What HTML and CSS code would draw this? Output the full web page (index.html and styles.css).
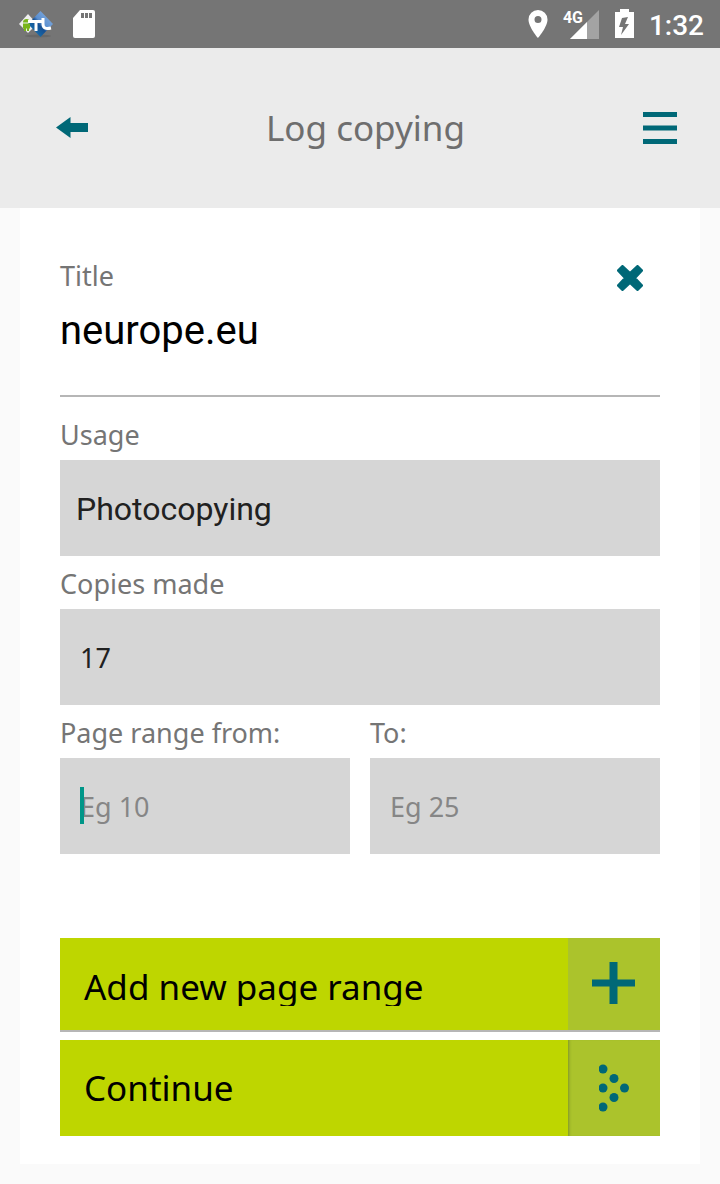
FILE: index.html
```html
<!DOCTYPE html>
<html lang="en">
<head>
<meta charset="utf-8">
<meta name="viewport" content="width=device-width, initial-scale=1">
<title>Log copying</title>
<link rel="stylesheet" href="styles.css">
</head>
<body>
<div class="status-bar">
  <div class="status-group">
    <svg class="app-logo" width="36" height="30" viewBox="0 0 36 30" aria-hidden="true">
      <defs><linearGradient id="blue" x1="1" y1="0" x2="0" y2="1"><stop offset="0" stop-color="#8db4e2"/><stop offset=".45" stop-color="#5b8fd0"/><stop offset=".55" stop-color="#164f92"/><stop offset="1" stop-color="#1685c0"/></linearGradient></defs>
      <ellipse cx="20" cy="27" rx="13" ry="1.500" fill="#686868"/>
      <path d="M1 15 10 5l9 10-9 9z" fill="#eee"/>
      <path d="M10 15 22.500 2 35 15 22.500 28z" fill="url(#blue)"/>
      <path d="M5 13.500a3.500 3.500 0 0 1 7 0zM5 14.500h7v5H5zM6 19h2v3H6zM9 19h2v3H9z" fill="#79b51c"/>
      <path d="M10 12.500h15M18 12.500V22M25 9v6q0 6 8 4" fill="none" stroke="#fff" stroke-width="3"/>
    </svg>
    <svg width="24" height="30" viewBox="0 0 24 30" aria-hidden="true">
      <path d="M8 1h13q2 0 2 2v24q0 2-2 2H3q-2 0-2-2V9z" fill="#fff"/>
      <path d="M9 4h3v5H9zM13 4h3v5h-3zM17 4h3v5h-3z" fill="#757575"/>
    </svg>
  </div>
  <div class="status-group status-right">
    <svg width="20" height="30" viewBox="0 0 20 30" aria-hidden="true">
      <path d="M10 1A9.500 9.500 0 0 0 .500 10.500C.500 18 10 29 10 29s9.500-11 9.500-18.500A9.500 9.500 0 0 0 10 1zm0 6a3.500 3.500 0 1 1 0 7 3.500 3.500 0 0 1 0-7z" fill="#fff"/>
    </svg>
    <div class="signal">
      <svg width="29" height="29" viewBox="0 0 29 29" aria-hidden="true">
        <path d="M29 0v29H0z" fill="#a3a3a3"/><path d="M17 12v17H0z" fill="#fff"/>
      </svg>
      <span class="network">4G</span>
    </div>
    <svg width="20" height="30" viewBox="0 0 20 30" aria-hidden="true">
      <path d="M6 0h9v3h5v26H1V3h5z" fill="#fff"/>
      <path d="M14 8 8 9 5 18h4l-2 8 8-11h-4z" fill="#757575"/>
    </svg>
    <span class="clock">1:32</span>
  </div>
</div>

<header class="header">
  <button class="icon-button" type="button" aria-label="Back">
    <svg width="32" height="22" viewBox="0 0 32 22"><path d="M0 10.500 14.500 0v6H32v9H14.500v6z" fill="#006877"/></svg>
  </button>
  <h1 class="heading">Log copying</h1>
  <button class="icon-button" type="button" aria-label="Menu">
    <svg width="34" height="32" viewBox="0 0 34 32"><path d="M0 0h34v5H0zM0 13.500h34v5H0zM0 27h34v5H0z" fill="#006877"/></svg>
  </button>
</header>

<main class="card">
  <section class="title-block">
    <div>
      <p class="label title-label">Title</p>
      <h2 class="title">neurope.eu</h2>
    </div>
    <button class="icon-button remove" type="button" aria-label="Remove title">
      <svg width="26" height="26" viewBox="0 0 26 26"><path d="M5.500 1.500 13 8.500 20.500 1.500 24.500 5.500 17.500 13 24.500 20.500 20.500 24.500 13 17.500 5.500 24.500 1.500 20.500 8.500 13 1.500 5.500z" fill="#006877" stroke="#006877" stroke-width="3" stroke-linejoin="round"/></svg>
    </button>
  </section>
  <form class="form">
    <label class="label" for="usage">Usage</label>
    <select class="field usage" id="usage"><option>Photocopying</option></select>
    <label class="label" for="copies">Copies made</label>
    <input class="field" id="copies" type="text" inputmode="numeric" value="17">
    <div class="range">
      <div class="range-part">
        <label class="label" for="from">Page range from:</label>
        <div class="active-field">
          <span class="caret"></span>
          <input class="field" id="from" type="text" inputmode="numeric" placeholder="Eg 10">
        </div>
      </div>
      <div class="range-part">
        <label class="label" for="to">To:</label>
        <input class="field" id="to" type="text" inputmode="numeric" placeholder="Eg 25">
      </div>
    </div>
    <div class="actions">
      <button class="action add" type="button">
        <span class="action-text">Add new page range</span>
        <span class="action-icon">
          <svg width="44" height="44" viewBox="0 0 44 44" aria-hidden="true"><path d="M17.500 0h8v17.500H43v7H25.500V42h-8V24.500H0v-7h17.500z" fill="#006877"/></svg>
        </span>
      </button>
      <button class="action continue" type="button">
        <span class="action-text">Continue</span>
        <span class="action-icon">
          <svg width="30" height="48" viewBox="0 0 30 48" aria-hidden="true" fill="#006877"><circle cx="4" cy="5" r="4.500"/><circle cx="15" cy="14.500" r="4.500"/><circle cx="4" cy="24" r="4.500"/><circle cx="25.500" cy="24" r="4.500"/><circle cx="15" cy="33.500" r="4.500"/><circle cx="4" cy="43" r="4.500"/></svg>
        </span>
      </button>
    </div>
  </form>
</main>
</body>
</html>
```
FILE: styles.css
```css
* {
  box-sizing: border-box;
}

body {
  margin: 0;
  background: #fafafa;
  color: #000;
  font-family: "Noto Sans", sans-serif;
}

h1, h2, p {
  margin: 0;
  font-weight: 400;
}

svg {
  display: block;
}

.status-bar {
  display: flex;
  justify-content: space-between;
  align-items: center;
  height: 48px;
  padding: 0 16px 0 18px;
  background: #757575;
  color: #fff;
  font-family: Roboto, sans-serif;
}

.status-group {
  display: flex;
  align-items: center;
  gap: 18px;
}

.status-right {
  gap: 15px;
}

.signal {
  position: relative;
  padding-left: 7px;
}

.network {
  position: absolute;
  top: 0;
  left: 0;
  font-size: 16px;
  font-weight: 700;
  line-height: 16px;
}

.clock {
  padding-top: 3px;
  font-size: 28px;
  font-weight: 500;
  line-height: 32px;
}

.header {
  display: flex;
  justify-content: space-between;
  align-items: center;
  height: 160px;
  padding: 0 43px 0 56px;
  background: #ebebeb;
}

.heading {
  color: #6e6e6e;
  font-size: 35px;
  line-height: 48px;
}

.icon-button {
  padding: 0;
  border: 0;
  background: none;
}

.card {
  margin: 0 20px 20px;
  padding: 48px 40px 28px;
  background: #fff;
}

.title-block {
  display: flex;
  justify-content: space-between;
  align-items: flex-start;
  padding-bottom: 40px;
  border-bottom: 2px solid #b6b6b6;
}

.label {
  display: block;
  padding: 8px 0 5px;
  color: #757575;
  font-size: 27px;
  line-height: 40px;
}

.title-label {
  padding: 0;
}

.title {
  padding-top: 11px;
  font-family: Roboto, sans-serif;
  font-size: 40px;
  line-height: 48px;
}

.remove {
  margin: 9px 17px 0 0;
}

.form {
  padding-top: 10px;
}

.field {
  display: block;
  width: 100%;
  height: 96px;
  padding: 0 20px;
  border: 0;
  border-radius: 0;
  outline: 0;
  background: #d6d6d6;
  color: #212121;
  font-family: "Noto Sans", sans-serif;
  font-size: 27px;
}

.field::placeholder {
  color: #868686;
  opacity: 1;
}

.usage {
  appearance: none;
  padding: 2px 16px 0;
  font-family: Roboto, sans-serif;
  font-size: 32px;
}

.range {
  display: grid;
  grid-template-columns: 1fr 1fr;
  gap: 20px;
}

.active-field {
  position: relative;
}

.caret {
  position: absolute;
  top: 29px;
  left: 20px;
  width: 4px;
  height: 37px;
  background: #009688;
}

.actions {
  display: grid;
  gap: 8px;
  padding-top: 84px;
}

.action {
  display: flex;
  justify-content: space-between;
  align-items: stretch;
  width: 100%;
  padding: 0;
  border: 0;
  background: #bed600;
  color: #000;
  font-family: "Noto Sans", sans-serif;
  font-size: 35px;
  text-align: left;
}

.add {
  height: 94px;
  border-bottom: 2px solid #b6b6b6;
}

.continue {
  height: 96px;
}

.action-text {
  align-self: center;
  padding-left: 24px;
  line-height: 48px;
}

.add .action-text {
  margin-top: 6px;
  line-height: 38px;
  overflow: hidden;
}

.action-icon {
  display: flex;
  justify-content: center;
  align-items: center;
  width: 92px;
  background: #abc32c;
}

.continue .action-icon {
  box-shadow: inset 3px 0 3px -2px #7f9428;
}
```
